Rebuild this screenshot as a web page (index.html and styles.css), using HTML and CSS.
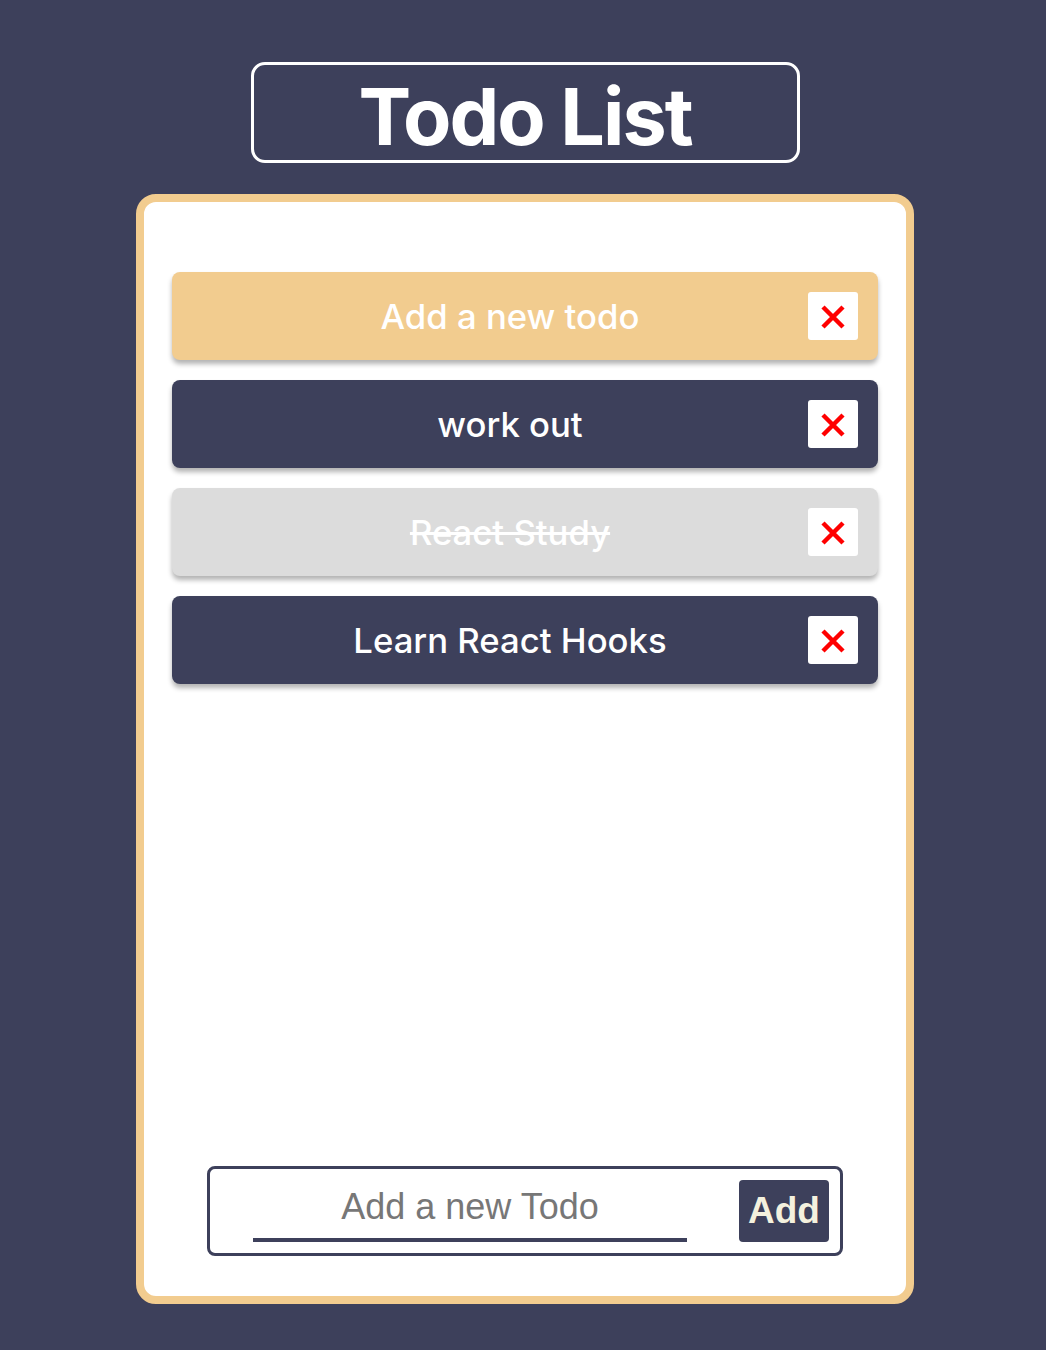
FILE: index.html
```html
<!DOCTYPE html>
<html lang="en">
<head>
<meta charset="utf-8">
<title>Todo List</title>
<link rel="stylesheet" href="styles.css">
</head>
<body>
<div class="app">
  <h1 class="title">Todo List</h1>
  <div class="card">
    <ul class="list">
      <li class="item item-active">
        <span class="item-text">Add a new todo</span>
        <button class="del" aria-label="delete"><svg viewBox="0 0 26 26" width="26" height="26"><path d="M3 3L23 23M23 3L3 23" stroke="#ff0000" stroke-width="4.5" stroke-linecap="butt"/></svg></button>
      </li>
      <li class="item">
        <span class="item-text">work out</span>
        <button class="del" aria-label="delete"><svg viewBox="0 0 26 26" width="26" height="26"><path d="M3 3L23 23M23 3L3 23" stroke="#ff0000" stroke-width="4.5" stroke-linecap="butt"/></svg></button>
      </li>
      <li class="item item-done">
        <span class="item-text">React Study</span>
        <button class="del" aria-label="delete"><svg viewBox="0 0 26 26" width="26" height="26"><path d="M3 3L23 23M23 3L3 23" stroke="#ff0000" stroke-width="4.5" stroke-linecap="butt"/></svg></button>
      </li>
      <li class="item">
        <span class="item-text">Learn React Hooks</span>
        <button class="del" aria-label="delete"><svg viewBox="0 0 26 26" width="26" height="26"><path d="M3 3L23 23M23 3L3 23" stroke="#ff0000" stroke-width="4.5" stroke-linecap="butt"/></svg></button>
      </li>
    </ul>
    <form class="add-form">
      <input class="add-input" type="text" placeholder="Add a new Todo">
      <button class="add-btn" type="button">Add</button>
    </form>
  </div>
</div>
</body>
</html>
```
FILE: styles.css
```css
html, body {
  margin: 0;
  padding: 0;
  background: #3d405b;
}
body {
  font-family: Inter, "Noto Sans", sans-serif;
}
.app {
  display: flex;
  flex-direction: column;
  align-items: center;
  padding-top: 62px;
  padding-left: 4px;
}
.title {
  box-sizing: border-box;
  width: 549px;
  height: 101px;
  margin: 0;
  border: 3px solid #ffffff;
  border-radius: 14px;
  color: #ffffff;
  font-size: 79px;
  font-weight: 700;
  line-height: 103px;
  text-align: center;
  letter-spacing: -2px;
}
.card {
  box-sizing: border-box;
  width: 778px;
  height: 1110px;
  margin-top: 31px;
  border: 8px solid #f2cc8f;
  border-radius: 20px;
  background: #ffffff;
  display: flex;
  flex-direction: column;
  align-items: center;
  padding-top: 70px;
}
.list {
  list-style: none;
  margin: 0;
  padding: 0;
  width: 706px;
  display: flex;
  flex-direction: column;
  gap: 20px;
  flex: 1;
}
.item {
  height: 88px;
  border-radius: 8px;
  background: #3d405b;
  box-shadow: 0 4px 5px rgba(0, 0, 0, 0.3);
  display: flex;
  align-items: center;
  padding-right: 20px;
}
.item-active {
  background: #f2cc8f;
}
.item-done {
  background: #dcdcdc;
}
.item-text {
  flex: 1;
  padding-left: 40px;
  text-align: center;
  color: #ffffff;
  font-size: 34.7px;
  font-weight: 500;
}
.item-done .item-text {
  text-decoration: line-through;
  text-decoration-thickness: 3px;
}
.del {
  width: 50px;
  height: 48px;
  border: none;
  border-radius: 3px;
  background: #ffffff;
  padding: 0;
  display: flex;
  align-items: center;
  justify-content: center;
  cursor: pointer;
}
.del svg {
  display: block;
  margin-top: 2px;
}
.add-form {
  box-sizing: border-box;
  width: 636px;
  height: 90px;
  margin-bottom: 40px;
  border: 3px solid #3d405b;
  border-radius: 8px;
  display: flex;
  align-items: flex-start;
  padding: 0 11px 0 43px;
}
.add-input {
  box-sizing: border-box;
  width: 434px;
  height: 56px;
  margin-top: 17px;
  border: none;
  border-bottom: 4px solid #3d405b;
  outline: none;
  background: transparent;
  font-family: "Liberation Sans", Arial, sans-serif;
  font-size: 36px;
  text-align: center;
  color: #333333;
  padding: 0 0 10px 0;
}
.add-input::placeholder {
  color: #777777;
}
.add-btn {
  margin-left: auto;
  margin-top: 11px;
  width: 90px;
  height: 62px;
  border: none;
  border-radius: 4px;
  background: #3d405b;
  color: #f4f1de;
  font-family: "Liberation Sans", Arial, sans-serif;
  font-weight: 700;
  font-size: 37px;
  padding: 0;
}
```
